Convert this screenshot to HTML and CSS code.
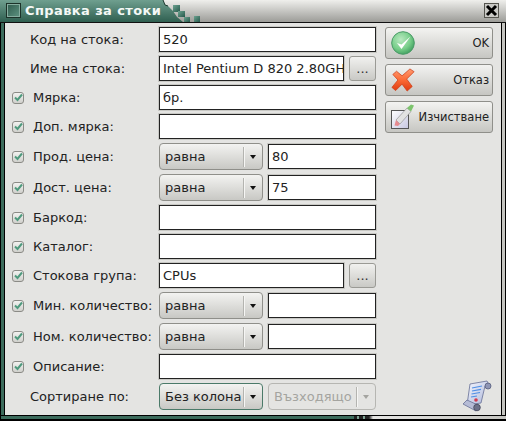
FILE: index.html
```html
<!DOCTYPE html>
<html lang="bg">
<head>
<meta charset="utf-8">
<title>Справка за стоки</title>
<link rel="stylesheet" href="styles.css">
</head>
<body>
<div class="window">
  <header class="titlebar">
    <svg class="title-art" width="210" height="23" viewBox="0 0 210 23">
      <defs>
        <linearGradient id="tg" x1="0" y1="0" x2="0" y2="1"><stop offset="0" stop-color="#6f9f8f"/><stop offset="1" stop-color="#2f5f50"/></linearGradient>
        <linearGradient id="sq" x1="0" y1="0" x2="1" y2="1"><stop offset="0" stop-color="#6ea391"/><stop offset="1" stop-color="#25574a"/></linearGradient>
      </defs>
      <path d="M0 0H163L165 5 168 6 173 11 177 17 183 22H0Z" fill="url(#tg)"/>
      <path d="M163 0L165 5 168 6" fill="none" stroke="#1d3a30" stroke-width="1"/>
      <rect x="173" y="5" width="7" height="7" fill="url(#sq)"/>
      <rect x="178" y="11" width="7" height="6" fill="url(#sq)"/>
      <rect x="184" y="17" width="6" height="5" fill="url(#sq)"/>
      <rect x="194" y="16" width="6" height="6" fill="url(#sq)"/>
      <rect x="0" y="22" width="210" height="1" fill="#111"/>
    </svg>
    <span class="win-icon"></span>
    <span class="title-text">Справка за стоки</span>
    <span class="close-btn">
      <svg width="13" height="13" viewBox="0 0 13 13"><path d="M2 2L11 11M11 2L2 11" stroke="#000" stroke-width="3"/></svg>
    </span>
  </header>
  <div class="client">
    <main class="form">
      <div class="row"><span class="label plain">Код на стока:</span><div class="input grow">520</div></div>
      <div class="row"><span class="label plain">Име на стока:</span><div class="input grow">Intel Pentium D 820 2.80GH</div><div class="browse">...</div></div>
      <div class="row"><span class="check"><svg width="9" height="9" viewBox="0 0 9 9"><path d="M1 4.5L3.5 7 8 1.5" fill="none" stroke="#4f9a7e" stroke-width="2"/></svg></span><span class="label">Мярка:</span><div class="input grow">бр.</div></div>
      <div class="row"><span class="check"><svg width="9" height="9" viewBox="0 0 9 9"><path d="M1 4.5L3.5 7 8 1.5" fill="none" stroke="#4f9a7e" stroke-width="2"/></svg></span><span class="label">Доп. мярка:</span><div class="input grow"></div></div>
      <div class="row tall"><span class="check"><svg width="9" height="9" viewBox="0 0 9 9"><path d="M1 4.5L3.5 7 8 1.5" fill="none" stroke="#4f9a7e" stroke-width="2"/></svg></span><span class="label">Прод. цена:</span><div class="combo"><span class="combo-text">равна</span><span class="combo-arrow"></span></div><div class="input grow">80</div></div>
      <div class="row tall"><span class="check"><svg width="9" height="9" viewBox="0 0 9 9"><path d="M1 4.5L3.5 7 8 1.5" fill="none" stroke="#4f9a7e" stroke-width="2"/></svg></span><span class="label">Дост. цена:</span><div class="combo"><span class="combo-text">равна</span><span class="combo-arrow"></span></div><div class="input grow">75</div></div>
      <div class="row"><span class="check"><svg width="9" height="9" viewBox="0 0 9 9"><path d="M1 4.5L3.5 7 8 1.5" fill="none" stroke="#4f9a7e" stroke-width="2"/></svg></span><span class="label">Баркод:</span><div class="input grow"></div></div>
      <div class="row"><span class="check"><svg width="9" height="9" viewBox="0 0 9 9"><path d="M1 4.5L3.5 7 8 1.5" fill="none" stroke="#4f9a7e" stroke-width="2"/></svg></span><span class="label">Каталог:</span><div class="input grow"></div></div>
      <div class="row"><span class="check"><svg width="9" height="9" viewBox="0 0 9 9"><path d="M1 4.5L3.5 7 8 1.5" fill="none" stroke="#4f9a7e" stroke-width="2"/></svg></span><span class="label">Стокова група:</span><div class="input grow">CPUs</div><div class="browse">...</div></div>
      <div class="row tall"><span class="check"><svg width="9" height="9" viewBox="0 0 9 9"><path d="M1 4.5L3.5 7 8 1.5" fill="none" stroke="#4f9a7e" stroke-width="2"/></svg></span><span class="label">Мин. количество:</span><div class="combo"><span class="combo-text">равна</span><span class="combo-arrow"></span></div><div class="input grow"></div></div>
      <div class="row tall"><span class="check"><svg width="9" height="9" viewBox="0 0 9 9"><path d="M1 4.5L3.5 7 8 1.5" fill="none" stroke="#4f9a7e" stroke-width="2"/></svg></span><span class="label">Ном. количество:</span><div class="combo"><span class="combo-text">равна</span><span class="combo-arrow"></span></div><div class="input grow"></div></div>
      <div class="row"><span class="check"><svg width="9" height="9" viewBox="0 0 9 9"><path d="M1 4.5L3.5 7 8 1.5" fill="none" stroke="#4f9a7e" stroke-width="2"/></svg></span><span class="label">Описание:</span><div class="input grow"></div></div>
      <div class="row tall"><span class="label plain">Сортиране по:</span><div class="combo focused"><span class="combo-text">Без колона</span><span class="combo-arrow"></span></div><div class="combo disabled"><span class="combo-text">Възходящо</span><span class="combo-arrow"></span></div></div>
    </main>
    <aside class="side">
      <div class="action">
        <svg class="action-icon" width="24" height="26" viewBox="0 0 24 26">
          <defs><radialGradient id="ok" cx="0.4" cy="0.35" r="0.7"><stop offset="0" stop-color="#b9e8c0"/><stop offset="0.6" stop-color="#79cf8b"/><stop offset="1" stop-color="#3d9c5c"/></radialGradient></defs>
          <circle cx="12" cy="13" r="11.300" fill="url(#ok)" stroke="#4b9a68"/>
          <path d="M6 13L10.500 19 19.500 6.500 10.500 14.500Z" fill="#fff"/>
        </svg>
        <span class="action-text">OK</span>
      </div>
      <div class="action">
        <svg class="action-icon" width="24" height="26" viewBox="0 0 26 26">
          <defs><linearGradient id="no" x1="0" y1="0" x2="0" y2="1"><stop offset="0" stop-color="#ff9a70"/><stop offset="0.5" stop-color="#fb6a35"/><stop offset="1" stop-color="#dd3a10"/></linearGradient></defs>
          <path d="M2 7L6 3.500 12 8.500 20.500 1 25 4 17 12 23 20 17.500 25 12 17.500 5 24.500 1 21 7.500 13Z" fill="url(#no)" stroke="#cc3d18" stroke-width="0.8"/>
        </svg>
        <span class="action-text">Отказ</span>
      </div>
      <div class="action">
        <svg class="action-icon" width="24" height="26" viewBox="0 0 24 26">
          <defs><linearGradient id="pp" x1="0" y1="0" x2="1" y2="1"><stop offset="0" stop-color="#fff"/><stop offset="1" stop-color="#c6c6e0"/></linearGradient></defs>
          <rect x="0.500" y="6.500" width="17" height="18" fill="url(#pp)" stroke="#555"/>
          <path d="M5 16L16 4 20 7.500 9 20Z" fill="#e2e2e2" stroke="#8a8a8a" stroke-width="0.6"/>
          <path d="M16 4L20 0.500 23 1.500 20 7.500Z" fill="#7cc46c"/>
          <path d="M5 16L9 20 7 22 3.500 21.500Z" fill="#e88a90"/>
        </svg>
        <span class="action-text">Изчистване</span>
      </div>
      <svg class="scroll-icon" width="32" height="32" viewBox="0 0 32 32">
        <defs><linearGradient id="sc" x1="0" y1="0" x2="1" y2="1"><stop offset="0" stop-color="#f6f8ff"/><stop offset="1" stop-color="#aab4d8"/></linearGradient></defs>
        <path d="M9 4L26 1 28 5 24 6 20 23 6 25Z" fill="url(#sc)" stroke="#666e96" stroke-width="0.8"/>
        <circle cx="27" cy="6" r="3" fill="#8f96b6" stroke="#565c7c" stroke-width="0.8"/>
        <path d="M11 8L21 6M11 11L20 9.300M10.500 14L19 12.500M10 17L16 16" stroke="#4f8fe6" stroke-width="1.200"/>
        <circle cx="15" cy="20" r="1.800" fill="#d23a50"/>
        <path d="M2 24L6 20 19 26 15 31Z" fill="#b6bcd6" stroke="#666e96" stroke-width="0.8"/>
        <circle cx="16" cy="27.500" r="3.300" fill="#6c7088" stroke="#44485c" stroke-width="0.8"/>
      </svg>
    </aside>
  </div>
  <footer class="bottom"></footer>
</div>
</body>
</html>
```
FILE: styles.css
```css
* { box-sizing: border-box; }
html, body { margin: 0; padding: 0; background: #000; }
body { font-family: "DejaVu Sans", sans-serif; font-size: 13px; color: #222; }
.window { width: 506px; height: 421px; display: flex; flex-direction: column; background: #000; overflow: hidden; }

.titlebar { position: relative; height: 23px; flex: none; display: flex; align-items: center; padding: 0 7px 1px 6px; background: linear-gradient(#efefec, #9c9c98); border-bottom: 1px solid #111; }
.title-art { position: absolute; left: 0; top: 0; }
.win-icon { position: relative; width: 15px; height: 15px; background: linear-gradient(135deg, #2e5a4c, #5f9482); border: 1px solid #1c3229; box-shadow: 0 0 0 1px #86ad9f inset; margin-right: 4px; }
.title-text { position: relative; color: #f4f8f6; font-size: 13px; font-weight: 700; letter-spacing: 0.4px; }
.close-btn { position: relative; margin-left: auto; width: 15px; height: 15px; display: flex; align-items: center; justify-content: center; background: #c9c9c5; border: 1px solid #55554f; }

.client { flex: 1; display: flex; min-height: 0; margin-left: 1px; margin-right: 1px; border-left: 3px solid #3c6c5c; border-right: 3px solid #c4c4c0; background: #e4e4e2; box-shadow: inset 1px 0 0 #000, inset -1px 0 0 #000; padding: 4px 0 0 8px; }
.form { width: 364px; flex: none; display: flex; flex-direction: column; gap: 4px; }
.row { height: 25px; flex: none; display: flex; align-items: center; }
.row.tall { height: 27px; }
.check { width: 12px; height: 12px; flex: none; display: flex; align-items: center; justify-content: center; background: linear-gradient(#f2f2f0, #d0d0cc); border: 1px solid #8b8b86; border-radius: 3px; }
.label { width: 126px; margin-left: 9px; flex: none; white-space: nowrap; }
.label.plain { width: 129px; margin-left: 18px; }

.input { height: 25px; padding: 0 0 0 3px; line-height: 23px; background: #fff; border: 1px solid #222; box-shadow: 0 0 0 1px #c8c8c4; white-space: nowrap; overflow: hidden; min-width: 0; }
.grow { flex: 1; }
.browse { width: 27px; height: 25px; margin-left: 5px; flex: none; display: flex; align-items: center; justify-content: center; border: 1px solid #9a9a95; border-radius: 3px; background: linear-gradient(#f1f1ef, #c9c9c5); color: #333; }

.combo { width: 104px; height: 27px; flex: none; margin-right: 5px; display: flex; align-items: center; border: 1px solid #8f8f8a; border-radius: 4px; background: linear-gradient(#f3f3f1, #c8c8c4); }
.combo:last-child { margin-right: 0; width: 108px; }
.combo-text { flex: 1; padding-left: 5px; white-space: nowrap; overflow: hidden; }
.combo-arrow { position: relative; width: 19px; height: 20px; flex: none; border-left: 1px solid #b4b4b0; box-shadow: inset 1px 0 0 #f6f6f4; }
.combo-arrow::after { content: ""; position: absolute; left: 6px; top: 8px; border-left: 3.5px solid transparent; border-right: 3.5px solid transparent; border-top: 4px solid #111; }
.combo.focused { border-color: #4b7a69; }
.combo.disabled { background: #e4e4e2; border-color: #b6b6b2; color: #a4a4a0; }
.combo.disabled .combo-arrow::after { border-top-color: #a4a4a0; }

.side { flex: 1; position: relative; display: flex; flex-direction: column; gap: 5px; margin-left: 9px; }
.action { height: 32px; flex: none; width: 108px; display: flex; align-items: center; justify-content: space-between; padding: 0 3px 0 5px; border: 1px solid #8f8f8a; border-radius: 3px; background: linear-gradient(#f3f3f1, #c6c6c2); }
.action-icon { flex: none; }
.action-text { white-space: nowrap; font-size: 11.5px; }
.scroll-icon { position: absolute; left: 76px; top: 353px; }

.bottom { height: 6px; flex: none; margin: 0 0 0 1px; border-top: 1px solid #000; border-bottom: 2px solid #000; background: linear-gradient(90deg, #3c6c5c 0, #3c6c5c 353px, #222 353px, #222 356px, #7fa394 356px, #7fa394 358px, #222 358px, #222 362px, #7fa394 362px, #7fa394 364px, #222 364px, #222 368px, #e4e4e2 372px, #c4c4c0 100%); }
```
